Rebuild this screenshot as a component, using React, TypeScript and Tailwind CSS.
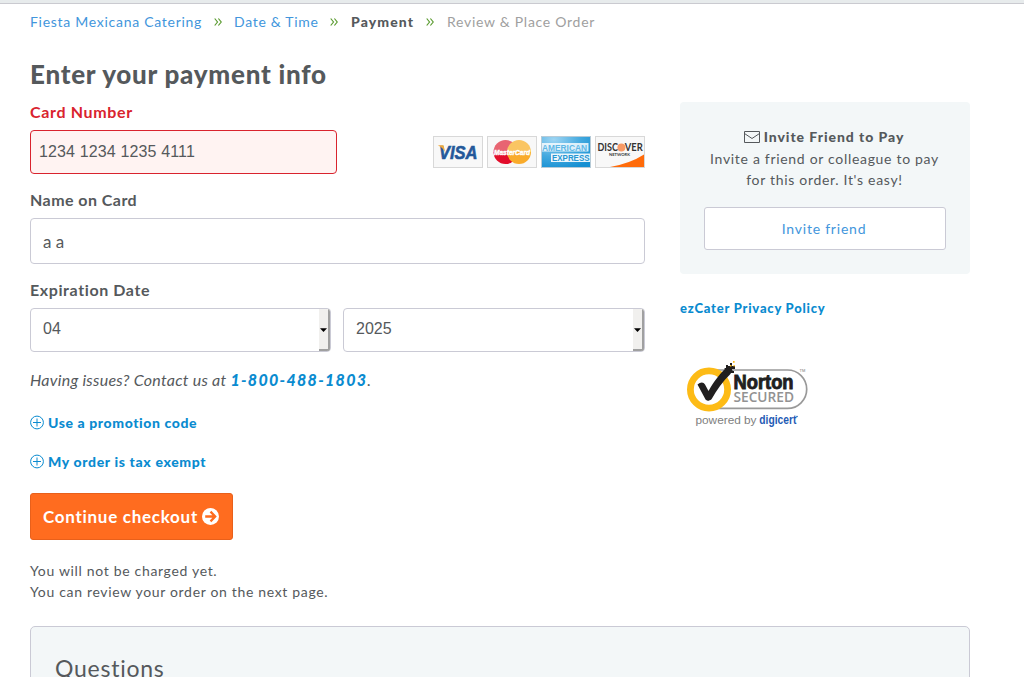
import React from 'react';

function Chevron() {
  return (
    <svg className="mt-px h-[8px] w-[8px] shrink-0" viewBox="0 0 8 8" fill="none" stroke="#5b9b30" strokeWidth="1.2">
      <path d="M0.7 0.5 L3.5 4 L0.7 7.5 M4.4 0.5 L7.2 4 L4.4 7.5" />
    </svg>
  );
}

function PlusCircle() {
  return (
    <svg className="h-[15px] w-[14px] shrink-0" viewBox="0 0 14 15" fill="none" stroke="#0a8bd0" strokeWidth="1">
      <circle cx="7" cy="7.5" r="6.4" />
      <path d="M3 7.5 H11 M7 3.5 V11.5" />
    </svg>
  );
}

function CardLogos() {
  const frame = 'block h-8 w-[50px]';
  return (
    <div className="flex gap-1 pt-[6px]">
      <svg className={frame} viewBox="0 0 50 32">
        <rect x="0.5" y="0.5" width="49" height="31" fill="#f8f8f8" stroke="#d8d8d8" />
        <text x="6" y="22.8" textLength="38.5" lengthAdjust="spacingAndGlyphs" fontFamily="Liberation Sans, sans-serif" fontWeight="700" fontStyle="italic" fontSize="18.5" fill="#24589a" stroke="#24589a" strokeWidth="0.6">VISA</text>
        <path d="M4.8 9.2 H10.5 L12.5 17 Q10.5 11.8 4.8 9.2Z" fill="#efa83a" />
      </svg>
      <svg className={frame} viewBox="0 0 50 32">
        <defs>
          <linearGradient id="mcRed" x2="0" y2="1"><stop offset="0.5" stopColor="#e86572" /><stop offset="0.5" stopColor="#e20d2b" /></linearGradient>
          <linearGradient id="mcGold" x2="0" y2="1"><stop offset="0.5" stopColor="#fac563" /><stop offset="0.5" stopColor="#f9ab2b" /></linearGradient>
        </defs>
        <rect x="0.5" y="0.5" width="49" height="31" fill="#f8f8f8" stroke="#d8d8d8" />
        <circle cx="18.5" cy="16" r="12" fill="url(#mcRed)" />
        <circle cx="32" cy="16" r="12" fill="url(#mcGold)" />
        <text x="7" y="18.9" textLength="36" lengthAdjust="spacingAndGlyphs" fontFamily="Liberation Sans, sans-serif" fontWeight="700" fontStyle="italic" fontSize="8" fill="#fff" stroke="#fff" strokeWidth="0.5">MasterCard</text>
      </svg>
      <svg className={frame} viewBox="0 0 50 32">
        <defs>
          <radialGradient id="amexBlue" cx="0.25" cy="0.1" r="1"><stop offset="0" stopColor="#9ed5f3" /><stop offset="0.55" stopColor="#43a9df" /><stop offset="1" stopColor="#158fd2" /></radialGradient>
        </defs>
        <rect x="0.5" y="0.5" width="49" height="31" fill="url(#amexBlue)" stroke="#b7cbd7" />
        <path d="M1 7H47.5V15.5H1Z" fill="#fff" opacity="0.8" />
        <path d="M10 17.5H49V26H10Z" fill="#fff" opacity="0.9" />
        <g fontFamily="Liberation Sans, sans-serif" fontWeight="700">
          <text x="1" y="14.8" textLength="45" lengthAdjust="spacingAndGlyphs" fontSize="9.8" fill="#5fb7e6">AMERICAN</text>
          <text x="11" y="25.3" textLength="37.5" lengthAdjust="spacingAndGlyphs" fontSize="9.8" fill="#2796d3">EXPRESS</text>
        </g>
      </svg>
      <svg className={frame} viewBox="0 0 50 32">
        <rect x="0.5" y="0.5" width="49" height="31" fill="#f8f8f8" stroke="#d8d8d8" />
        <path d="M15 31 Q35 27.5 49 18.5 V31Z" fill="#ff6b0a" />
        <g fontFamily="Lato, sans-serif" fontWeight="700" fill="#333">
          <text x="2.5" y="15.2" textLength="20.5" lengthAdjust="spacingAndGlyphs" fontSize="11.2">DISC</text>
          <text x="29.7" y="15.2" textLength="18" lengthAdjust="spacingAndGlyphs" fontSize="11.2">VER</text>
          <text x="14" y="20" textLength="21" lengthAdjust="spacingAndGlyphs" fontSize="4.2">NETWORK</text>
        </g>
        <circle cx="26.4" cy="11.5" r="4" fill="#f79a66" />
      </svg>
    </div>
  );
}

function NortonSeal() {
  return (
    <svg className="block h-[72px] w-[130px]" viewBox="0 0 130 72">
      <path d="M25 11 H107.5 a19.2 19.2 0 0 1 0 38.4 H25" fill="#fff" stroke="#999" strokeWidth="1.7" />
      <circle cx="29" cy="30.5" r="18.6" fill="#fff" stroke="#fdbb16" strokeWidth="6.8" />
      <path d="M17.5 25.5 C20.5 22.8 23.5 22.8 25 25.5 L28.5 32 C34 22.5 39 15.5 46 9 L50 9.5 L50 12 L53 11 L50 15.5 C43 22 37 31 31.5 40.2 C28.5 42.5 26 42 25 39.5 Z" fill="#211f1f" />
      <path d="M44 9h2v-3h2v1h2v-3h2v3h3v3h-3v2h2v2h-4z" fill="#211f1f" />
      <path d="M53 2h1.6v1.8h-1.6z M50 6h1.5v1.5h-1.5z M53.5 6h1.3v1.6h-1.3z" fill="#fdbb16" />
      <text x="53.5" y="29.7" textLength="60" lengthAdjust="spacingAndGlyphs" fontFamily="Liberation Sans, sans-serif" fontWeight="700" fontSize="19.5" fill="#211f1f" stroke="#211f1f" strokeWidth="0.9">Norton</text>
      <text x="53.5" y="43.2" textLength="60.5" lengthAdjust="spacingAndGlyphs" fontFamily="Open Sans, sans-serif" fontWeight="600" fontSize="13.5" fill="#929292">SECURED</text>
      <text x="119.5" y="13" fontFamily="Liberation Sans, sans-serif" fontSize="4" fill="#777">TM</text>
      <text x="15.5" y="65.2" textLength="61" lengthAdjust="spacingAndGlyphs" fontFamily="Liberation Sans, sans-serif" fontSize="11.7" fill="#808080">powered by</text>
      <text x="79.3" y="65.2" textLength="37" lengthAdjust="spacingAndGlyphs" fontFamily="Liberation Sans, sans-serif" fontWeight="700" fontSize="12" fill="#1f5bb5">digicert</text>
      <circle cx="117" cy="57.5" r="0.8" fill="#1f5bb5" />
    </svg>
  );
}

function SelectBox({ value, width }: { value: string; width: string }) {
  return (
    <div className={`${width} flex h-11 justify-between overflow-hidden rounded-[4px] border border-[#cacad5] bg-white`}>
      <span className="pl-3 font-['Liberation_Sans',sans-serif] text-[16px] leading-[39px]">{value}</span>
      <div className="flex w-[11px] items-center justify-end border-r-2 border-b-2 border-[#a0a0a0] bg-[#f1f0ee]">
        <svg className="mt-[1px] mr-px h-[4px] w-[7px] shrink-0" viewBox="0 0 7 4"><path d="M0 0.2H7L3.5 4Z" fill="#000" /></svg>
      </div>
    </div>
  );
}

export default function App() {
  return (
    <div className="h-[677px] overflow-hidden bg-white font-['Lato',sans-serif] text-[14px] text-[#55595c]">
      <div className="h-1 border-b border-[#cacad0] bg-[#e7ebec]" />
      <nav className="flex h-[34px] items-center pl-[30px] whitespace-nowrap">
        <a className="w-[184px] tracking-[0.72px] text-[#4296dc]">Fiesta Mexicana Catering</a>
        <Chevron />
        <a className="ml-3 w-[96px] tracking-[0.7px] text-[#4296dc]">Date &amp; Time</a>
        <Chevron />
        <span className="ml-[13px] w-[75px] font-black tracking-[1.1px]">Payment</span>
        <Chevron />
        <span className="ml-[13px] tracking-[0.72px] text-[#a0a0a0]">Review &amp; Place Order</span>
      </nav>
      <div className="flex gap-[35px] px-[30px]">
        <main className="w-[615px]">
          <h1 className="pt-[19px] text-[26px] leading-[34px] font-black tracking-[0.75px]">Enter your payment info</h1>
          <div className="pt-[11px] text-[16px] leading-5 font-bold tracking-[0.65px] text-[#d9232e]">Card Number</div>
          <div className="mt-2 flex justify-between">
            <div className="h-11 w-[307px] rounded-[4px] border border-[#d9232e] bg-[#fff3f2] pl-2 font-['Liberation_Sans',sans-serif] text-[16px] leading-[41px] tracking-[0.14px]">1234 1234 1235 4111</div>
            <CardLogos />
          </div>
          <div className="pt-4 text-[16px] leading-5 font-bold tracking-[0.45px]">Name on Card</div>
          <div className="mt-2 h-[46px] rounded-[4px] border border-[#cacad5] pl-3 text-[17px] leading-[45px]">a a</div>
          <div className="pt-4 text-[16px] leading-5 font-bold tracking-[0.6px]">Expiration Date</div>
          <div className="mt-2 flex justify-between">
            <SelectBox value="04" width="w-[301px]" />
            <SelectBox value="2025" width="w-[302px]" />
          </div>
          <p className="pt-[18px] text-[16px] leading-5 italic tracking-[0.26px]">
            Having issues? Contact us at <a className="font-black tracking-[1.3px] text-[#0a8bd0]">1-800-488-1803</a>.
          </p>
          <div className="mt-[22px] flex h-5 items-center gap-1 font-black tracking-[0.6px] text-[#0a8bd0]"><PlusCircle />Use a promotion code</div>
          <div className="mt-[19px] flex h-5 items-center gap-1 font-black tracking-[0.65px] text-[#0a8bd0]"><PlusCircle />My order is tax exempt</div>
          <button className="mt-[22px] flex h-[47px] w-[203px] items-center gap-1 rounded-[3px] border border-[#e8601b] bg-[#ff6c1f] pl-3 text-[17px] font-bold tracking-[0.72px] whitespace-nowrap text-white">
            Continue checkout
            <svg className="h-[17px] w-[17px] shrink-0" viewBox="0 0 17 17">
              <circle cx="8.5" cy="8.5" r="8.5" fill="#fff" />
              <path d="M3.2 8.5H13M8.5 3.6L13.2 8.5L8.5 13.4" fill="none" stroke="#ff6c1f" strokeWidth="2.3" />
            </svg>
          </button>
          <p className="pt-5 leading-[21px] tracking-[0.67px]">You will not be charged yet.<br />You can review your order on the next page.</p>
        </main>
        <aside className="w-[290px] pt-[64px]">
          <section className="h-[172px] rounded-[4px] bg-[#f3f7f8] px-6 pt-[23px] text-center whitespace-nowrap">
            <div className="mr-[2px] flex h-[23px] items-center justify-center gap-1 font-black tracking-[0.95px]">
              <svg className="h-3 w-4 shrink-0" viewBox="0 0 16 12" fill="none" stroke="#55595c"><path d="M0.5 0.5H15.5V11.5H0.5Z M0.5 2.5L8 7.5L15.5 2.5" /></svg>
              Invite Friend to Pay
            </div>
            <p className="mr-px leading-[21px] tracking-[0.69px]">Invite a friend or colleague to pay<br />for this order. It's easy!</p>
            <button className="mt-[17px] h-[43px] w-[242px] rounded-[3px] border border-[#cacad5] bg-white pr-[2px] tracking-[0.78px] text-[#4296dc]">Invite friend</button>
          </section>
          <a className="mt-6 block h-5 text-[13px] leading-5 font-black tracking-[0.77px] whitespace-nowrap text-[#0a8bd0]">ezCater Privacy Policy</a>
          <div className="mt-[41px]"><NortonSeal /></div>
        </aside>
      </div>
      <section className="mt-6 ml-[30px] h-[100px] w-[940px] rounded-[5px] border border-[#cacad5] bg-[#f3f7f8] pt-[25px] pl-6 text-[23px] leading-8 tracking-[0.75px]">Questions</section>
    </div>
  );
}
